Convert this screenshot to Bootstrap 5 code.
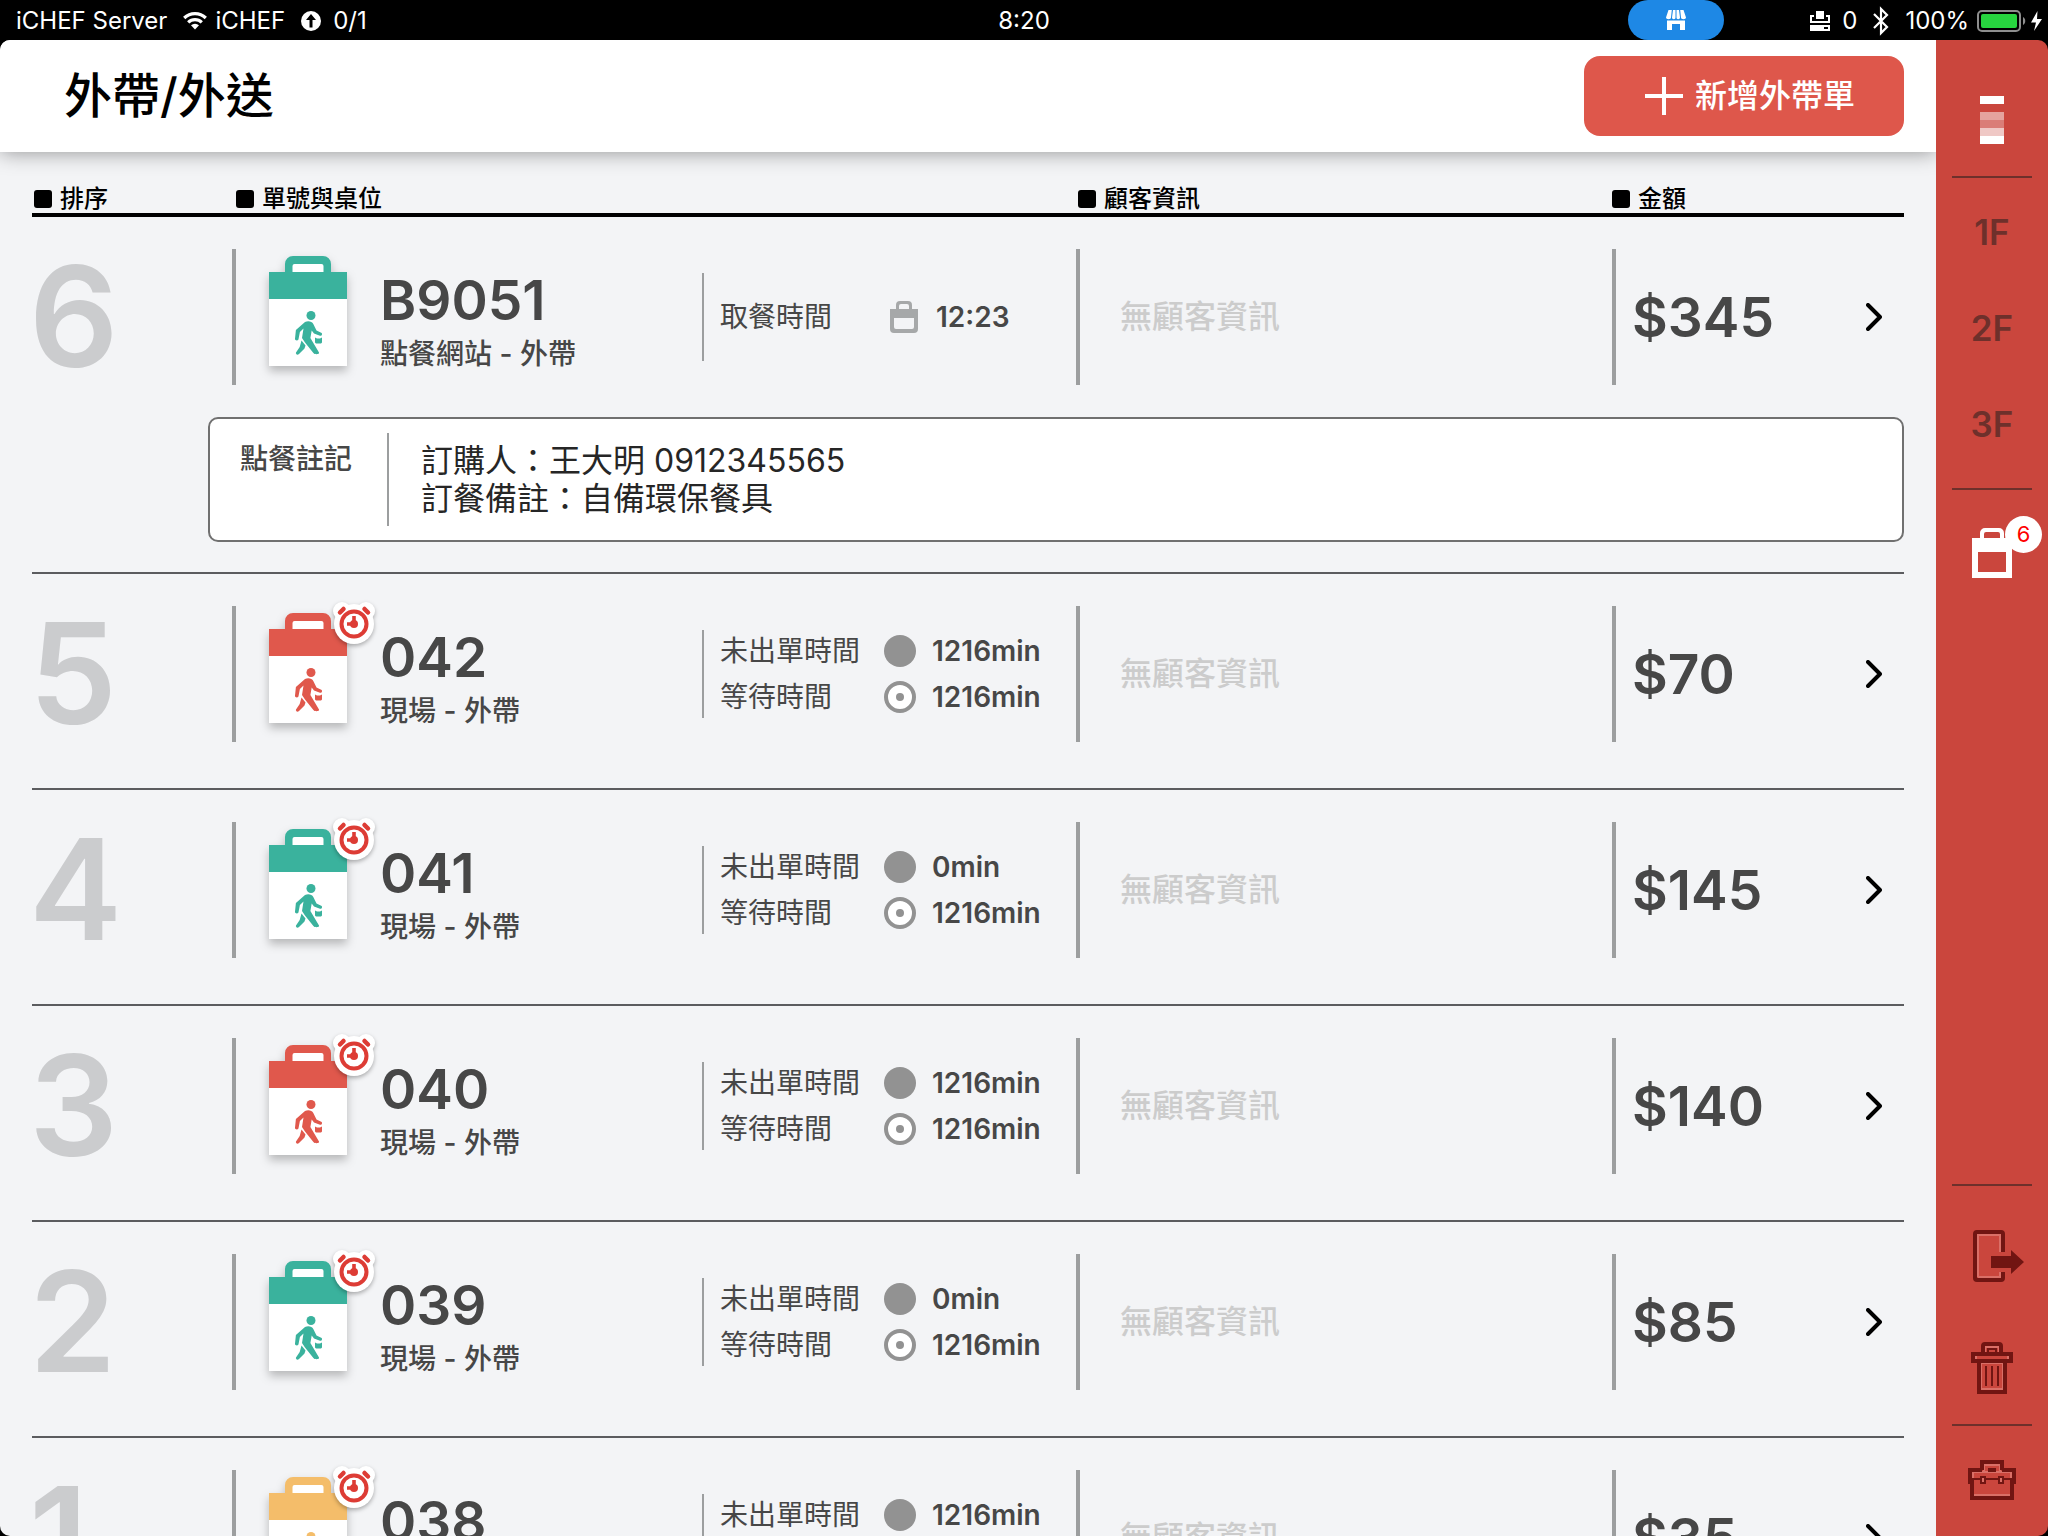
<!DOCTYPE html>
<html lang="zh-Hant">
<head>
<meta charset="utf-8">
<meta name="viewport" content="width=device-width, initial-scale=1">
<title>外帶/外送</title>
<link href="https://cdn.jsdelivr.net/npm/bootstrap@5.3.0/dist/css/bootstrap.min.css" rel="stylesheet">
<script src="https://cdn.jsdelivr.net/npm/bootstrap@5.3.0/dist/js/bootstrap.bundle.min.js"></script>
<style>
  body { background: #000; color: #474747; font-family: Inter, "Noto Sans CJK TC", sans-serif; font-size: 28px; line-height: 32px; }
  svg { display: block; flex: none; overflow: visible; }
  .status-bar { height: 40px; padding: 2px 5px 0 16px; color: #fff; font-size: 24px; }
  .status-side { flex: 1 1 0; }
  .status-side:first-child { margin-right: -11px; }
  .store-pill { width: 96px; height: 40px; border-radius: 20px; background: #1e88e5; margin: -2px 86px 0 0; }
  .queue-count { margin-left: -4px; }
  .shell { border-radius: 10px; overflow: hidden; }
  .content-pane { background: #f3f4f6; min-width: 0; overflow: hidden; }
  .page-head { height: 112px; padding: 0 32px 0 64px; background: #fff; box-shadow: 0 0 20px rgba(0,0,0,.42); z-index: 1; }
  .page-title { font-size: 48px; line-height: 56px; font-weight: 500; color: #000; }
  .btn-add { width: 320px; height: 80px; border-radius: 16px; background: #de574b; color: #fff; font-size: 32px; font-weight: 500; padding: 0 0 0 12px; gap: 12px; }
  .btn-add:hover { background: #cf4a3f; color: #fff; }
  .list-area { padding: 24px 32px 0; }
  .orders { width: 100%; table-layout: fixed; border-collapse: separate; border-spacing: 0; }
  .orders th { height: 41px; border-bottom: 4px solid #000; padding: 9px 0 0 2px; vertical-align: middle; font-size: 24px; line-height: 24px; font-weight: 500; color: #000; }
  .orders th::before { content: ""; display: inline-block; width: 18px; height: 18px; border-radius: 3px; background: #000; margin-right: 8px; vertical-align: -1px; }
  .orders th.th-flush { padding-left: 0; }
  .col-rank { width: 200px; }
  .col-guest { width: 536px; }
  .col-total { width: 292px; }
  .orders td { padding: 32px 0 46px; vertical-align: top; border-bottom: 2px solid #5b5c5f; }
  .orders tr.has-note td { padding-bottom: 0; border-bottom: 0; }
  .orders td.note-cell { padding: 32px 0 30px 176px; }
  .cell-box { height: 136px; }
  .bar-left { border-left: 4px solid #9c9e9f; }
  .rank { margin-left: -3px; font-size: 140px; line-height: 134px; font-weight: 600; color: #cbccce; }
  .bag-slot { width: 78px; height: 110px; margin: 0 33px 12px 33px; filter: drop-shadow(0 5px 5px rgba(0,0,0,.25)); }
  .bag-green { color: #3ab29d; }
  .bag-red { color: #e0584c; }
  .bag-amber { color: #f4bd6a; }
  .alarm { position: absolute; left: 96px; top: -5px; filter: drop-shadow(0 2px 2px rgba(0,0,0,.3)); }
  .order-no { font-size: 55px; line-height: 60px; font-weight: 600; }
  .source { font-weight: 500; line-height: 32px; padding-top: 8px; }
  .order-name { padding-top: 6px; }
  .timing { width: 374px; height: 88px; border-left: 2px solid #9c9e9f; padding-left: 16px; }
  .timing-line { height: 46px; flex: none; }
  .timing-name { width: 164px; }
  .timing-value { font-weight: 600; margin-left: 16px; }
  .timing-pickup .timing-name { width: 168px; }
  .guest { padding-left: 40px; font-size: 32px; font-weight: 500; color: #ccc; }
  .total-box { padding: 0 22px 0 16px; }
  .total { font-size: 55px; line-height: 60px; font-weight: 600; }
  .btn-open { color: #000; line-height: 0; }
  .note-box { background: #fff; border: 2px solid #707070; border-radius: 10px; padding: 14px 0 14px 30px; }
  .note-name { width: 147px; font-weight: 500; line-height: 52px; }
  .note-text { border-left: 2px solid #9c9e9f; padding: 9px 0 8px 32px; font-size: 32px; line-height: 38px; color: #262626; }
  .side-rail { width: 112px; padding: 0 16px; background: #ca463d; z-index: 2; }
  .side-rail hr { margin: 0; border-top: 2px solid #6e302b; opacity: 1; width: 80px; }
  .logo-slot { height: 136px; padding-top: 56px; }
  .floor { height: 96px; color: #6e302b; font-size: 35px; font-weight: 600; }
  .floors { padding: 6px 0 16px; }
  .takeout { margin-top: 38px; }
  .count { position: absolute; left: 33px; top: -12px; width: 37px; height: 37px; border-radius: 50%; background: #fff; color: #f00; font-size: 22px; line-height: 37px; }
  .rail-btn { line-height: 0; color: #711512; }
  .rail-pair { padding: 44px 0 30px; gap: 60px; }
  .rail-exit { margin-left: 14px; }
  .rail-last { padding: 34px 0 36px; }
</style>
</head>
<body class="vh-100 d-flex flex-column overflow-hidden">

<svg width="0" height="0" class="position-absolute" aria-hidden="true">
  <symbol id="bag" viewBox="0 0 78 110">
    <rect x="20" y="4" width="38" height="16" fill="#fff"/>
    <path fill="currentColor" fill-rule="evenodd" d="M16 16V8a8 8 0 0 1 8-8h30a8 8 0 0 1 8 8v8h16v28H0V16zM23.500 16h31v-6a2 2 0 0 0-2-2h-27a2 2 0 0 0-2 2z"/>
    <path fill="#fff" d="M0 43h78v67H0z"/>
    <g fill="currentColor">
      <circle cx="42" cy="59.500" r="4.500"/>
      <path d="M36 66c3-1.500 7-.8 8.300 2l3.200 6.500 4.700 2.200c1.600.8.8 3.600-1.200 3.100l-6-2.300-2.300-3-1.300 7.500 8.600 14.500c1 1.700-4.200 2.500-5.600.5L36 86.500l-3-4.500 1.500-9.500-3.600 3.500-1.400 7.300c-.5 1.800-3.700 1.400-3.500-.5l.9-8.800z"/>
      <path d="M32.500 84.500l4 5-1 3-5.500 5.500c-2 1.800-3.600-.5-3-1.500l3.700-5.500z"/>
      <path d="M46 81.500l2 1h3l2-1v5l-1 1h-5l-1-1z"/>
    </g>
  </symbol>
  <symbol id="alarm" viewBox="0 0 44 44">
    <g fill="#fff"><circle cx="22" cy="23" r="20"/><circle cx="10" cy="10" r="9"/><circle cx="34" cy="10" r="9"/></g>
    <circle cx="22" cy="23" r="12.500" fill="none" stroke="#dd3c35" stroke-width="4"/>
    <path d="M8 11.500l3.500-3.500M36 11.500l-3.500-3.500" stroke="#dd3c35" stroke-width="4.500" stroke-linecap="round"/>
    <circle cx="22" cy="23" r="4" fill="#dd3c35"/>
    <path d="M22 15v8h-7" fill="none" stroke="#dd3c35" stroke-width="3.600"/>
  </symbol>
  <symbol id="dot" viewBox="0 0 32 32"><circle cx="16" cy="16" r="16" fill="#929292"/></symbol>
  <symbol id="target" viewBox="0 0 32 32"><circle cx="16" cy="16" r="14" fill="#fff" stroke="#929292" stroke-width="4"/><circle cx="16" cy="16" r="4" fill="#929292"/></symbol>
  <symbol id="chevron" viewBox="0 0 16 28"><path d="M2 2l12 12L2 26" fill="none" stroke="currentColor" stroke-width="4" stroke-linecap="round" stroke-linejoin="round"/></symbol>
</svg>

<header class="status-bar d-flex align-items-center flex-shrink-0">
  <div class="status-side d-flex align-items-center">
    <span>iCHEF Server</span>
    <svg class="ms-3 me-2" width="24" height="18" viewBox="0 0 24 18" fill="none" stroke="#fff" stroke-width="3.200"><path d="M1.200 6a15.500 15.500 0 0 1 21.600 0M5.200 10.300a9.800 9.800 0 0 1 13.600 0"/><path d="M12 17.500l-4-4.300a6 6 0 0 1 8 0z" fill="#fff" stroke="none"/></svg>
    <span>iCHEF</span>
    <svg class="mx-3" width="20" height="20" viewBox="0 0 20 20"><circle cx="10" cy="10" r="10" fill="#fff"/><path d="M10 3l5 6h-3.500v7.500h-3V9H5z" fill="#000"/></svg>
    <span class="queue-count">0/1</span>
  </div>
  <time>8:20</time>
  <div class="status-side d-flex align-items-center justify-content-end">
    <button type="button" class="btn p-0 border-0 store-pill d-flex align-items-center justify-content-center" aria-label="門市">
      <svg width="20" height="20" viewBox="0 0 20 20" fill="#fff"><path d="M2.500 0h3.300L5 7.500c0 1-1 1.700-2.500 1.700S0 8.300 0 7.500zM7 0h2.500v7.500c0 1-.6 1.700-1.700 1.700S6 8.500 6 7.500zM10.500 0H13l1 7.500c0 1-.7 1.700-1.800 1.700s-1.700-.7-1.700-1.700zM14.200 0h3.300L20 7.500c0 .8-1 1.700-2.500 1.700S15 8.500 15 7.500zM1 10.500h18V20h-5v-6H6v6H1z"/></svg>
    </button>
    <svg class="me-2" width="20" height="20" viewBox="0 0 20 20" fill="#fff"><path d="M6 0h8v8H6zM0 4h4v2H2v4h16V6h-2V4h4v8H0zM0 14h20v6H0z"/><path d="M14 16h4v2h-4z" fill="#000"/></svg>
    <span class="ms-1">0</span>
    <svg class="mx-3" width="16" height="28" viewBox="0 0 16 28" fill="none" stroke="#fff" stroke-width="2.200"><path d="M1 7l13 13-6 6V2l6 6L1 21"/></svg>
    <span>100%</span>
    <svg class="ms-2" width="66" height="22" viewBox="0 0 66 22"><rect x="1" y="1" width="42" height="20" rx="4" fill="none" stroke="#8e8e8e" stroke-width="2"/><rect x="4" y="4" width="36" height="14" rx="2" fill="#27d53f"/><path d="M46 7c3 1.500 3 6.500 0 8z" fill="#8e8e8e"/><path d="M60.500 1L54 12.500h5L57 21l8-12h-5z" fill="#fff"/></svg>
  </div>
</header>

<div class="shell d-flex flex-grow-1">
  <main class="content-pane flex-grow-1 d-flex flex-column">
    <div class="page-head position-relative d-flex align-items-center justify-content-between flex-shrink-0">
      <h1 class="page-title m-0">外帶/外送</h1>
      <button type="button" class="btn btn-add border-0 d-flex align-items-center justify-content-center">
        <svg width="38" height="38" viewBox="0 0 38 38" stroke="#fff" stroke-width="4"><path d="M19 0v38M0 19h38"/></svg>新增外帶單
      </button>
    </div>
    <div class="list-area">
      <table class="orders">
        <colgroup><col class="col-rank"><col><col class="col-guest"><col class="col-total"></colgroup>
        <thead><tr><th scope="col">排序</th><th scope="col" class="ps-1">單號與桌位</th><th scope="col">顧客資訊</th><th scope="col" class="th-flush">金額</th></tr></thead>
        <tbody>
          <tr class="has-note">
            <td><div class="cell-box rank">6</div></td>
            <td><div class="cell-box bar-left d-flex align-items-center position-relative">
              <svg class="bag-slot bag-green"><use href="#bag"/></svg>
              <div class="order-name flex-grow-1"><div class="order-no">B9051</div><div class="source">點餐網站 - 外帶</div></div>
              <div class="timing timing-pickup d-flex flex-column justify-content-center">
                <div class="timing-line d-flex align-items-center"><span class="timing-name">取餐時間</span>
                  <svg width="32" height="32" viewBox="0 0 32 32"><path fill="#a6a8a9" fill-rule="evenodd" d="M8 8V4a4 4 0 0 1 4-4h8a4 4 0 0 1 4 4v4h6v20a4 4 0 0 1-4 4H6a4 4 0 0 1-4-4V8zM11 8h10V5a2 2 0 0 0-2-2h-6a2 2 0 0 0-2 2zM6 17v9a2 2 0 0 0 2 2h16a2 2 0 0 0 2-2v-9z"/></svg>
                  <span class="timing-value">12:23</span></div>
              </div>
            </div></td>
            <td><div class="cell-box bar-left guest d-flex align-items-center">無顧客資訊</div></td>
            <td><div class="cell-box bar-left total-box d-flex align-items-center justify-content-between"><span class="total">$345</span><button type="button" class="btn btn-open border-0 p-0" aria-label="開啟"><svg width="16" height="28"><use href="#chevron"/></svg></button></div></td>
          </tr>
          <tr>
            <td colspan="4" class="note-cell"><div class="note-box d-flex">
              <div class="note-name">點餐註記</div>
              <div class="note-text">訂購人：王大明 0912345565<br>訂餐備註：自備環保餐具</div>
            </div></td>
          </tr>
          <tr>
            <td><div class="cell-box rank">5</div></td>
            <td><div class="cell-box bar-left d-flex align-items-center position-relative">
              <svg class="bag-slot bag-red"><use href="#bag"/></svg><svg class="alarm" width="44" height="44"><use href="#alarm"/></svg>
              <div class="order-name flex-grow-1"><div class="order-no">042</div><div class="source">現場 - 外帶</div></div>
              <div class="timing d-flex flex-column justify-content-center">
                <div class="timing-line d-flex align-items-center"><span class="timing-name">未出單時間</span><svg width="32" height="32"><use href="#dot"/></svg><span class="timing-value">1216min</span></div>
                <div class="timing-line d-flex align-items-center"><span class="timing-name">等待時間</span><svg width="32" height="32"><use href="#target"/></svg><span class="timing-value">1216min</span></div>
              </div>
            </div></td>
            <td><div class="cell-box bar-left guest d-flex align-items-center">無顧客資訊</div></td>
            <td><div class="cell-box bar-left total-box d-flex align-items-center justify-content-between"><span class="total">$70</span><button type="button" class="btn btn-open border-0 p-0" aria-label="開啟"><svg width="16" height="28"><use href="#chevron"/></svg></button></div></td>
          </tr>
          <tr>
            <td><div class="cell-box rank">4</div></td>
            <td><div class="cell-box bar-left d-flex align-items-center position-relative">
              <svg class="bag-slot bag-green"><use href="#bag"/></svg><svg class="alarm" width="44" height="44"><use href="#alarm"/></svg>
              <div class="order-name flex-grow-1"><div class="order-no">041</div><div class="source">現場 - 外帶</div></div>
              <div class="timing d-flex flex-column justify-content-center">
                <div class="timing-line d-flex align-items-center"><span class="timing-name">未出單時間</span><svg width="32" height="32"><use href="#dot"/></svg><span class="timing-value">0min</span></div>
                <div class="timing-line d-flex align-items-center"><span class="timing-name">等待時間</span><svg width="32" height="32"><use href="#target"/></svg><span class="timing-value">1216min</span></div>
              </div>
            </div></td>
            <td><div class="cell-box bar-left guest d-flex align-items-center">無顧客資訊</div></td>
            <td><div class="cell-box bar-left total-box d-flex align-items-center justify-content-between"><span class="total">$145</span><button type="button" class="btn btn-open border-0 p-0" aria-label="開啟"><svg width="16" height="28"><use href="#chevron"/></svg></button></div></td>
          </tr>
          <tr>
            <td><div class="cell-box rank">3</div></td>
            <td><div class="cell-box bar-left d-flex align-items-center position-relative">
              <svg class="bag-slot bag-red"><use href="#bag"/></svg><svg class="alarm" width="44" height="44"><use href="#alarm"/></svg>
              <div class="order-name flex-grow-1"><div class="order-no">040</div><div class="source">現場 - 外帶</div></div>
              <div class="timing d-flex flex-column justify-content-center">
                <div class="timing-line d-flex align-items-center"><span class="timing-name">未出單時間</span><svg width="32" height="32"><use href="#dot"/></svg><span class="timing-value">1216min</span></div>
                <div class="timing-line d-flex align-items-center"><span class="timing-name">等待時間</span><svg width="32" height="32"><use href="#target"/></svg><span class="timing-value">1216min</span></div>
              </div>
            </div></td>
            <td><div class="cell-box bar-left guest d-flex align-items-center">無顧客資訊</div></td>
            <td><div class="cell-box bar-left total-box d-flex align-items-center justify-content-between"><span class="total">$140</span><button type="button" class="btn btn-open border-0 p-0" aria-label="開啟"><svg width="16" height="28"><use href="#chevron"/></svg></button></div></td>
          </tr>
          <tr>
            <td><div class="cell-box rank">2</div></td>
            <td><div class="cell-box bar-left d-flex align-items-center position-relative">
              <svg class="bag-slot bag-green"><use href="#bag"/></svg><svg class="alarm" width="44" height="44"><use href="#alarm"/></svg>
              <div class="order-name flex-grow-1"><div class="order-no">039</div><div class="source">現場 - 外帶</div></div>
              <div class="timing d-flex flex-column justify-content-center">
                <div class="timing-line d-flex align-items-center"><span class="timing-name">未出單時間</span><svg width="32" height="32"><use href="#dot"/></svg><span class="timing-value">0min</span></div>
                <div class="timing-line d-flex align-items-center"><span class="timing-name">等待時間</span><svg width="32" height="32"><use href="#target"/></svg><span class="timing-value">1216min</span></div>
              </div>
            </div></td>
            <td><div class="cell-box bar-left guest d-flex align-items-center">無顧客資訊</div></td>
            <td><div class="cell-box bar-left total-box d-flex align-items-center justify-content-between"><span class="total">$85</span><button type="button" class="btn btn-open border-0 p-0" aria-label="開啟"><svg width="16" height="28"><use href="#chevron"/></svg></button></div></td>
          </tr>
          <tr>
            <td><div class="cell-box rank">1</div></td>
            <td><div class="cell-box bar-left d-flex align-items-center position-relative">
              <svg class="bag-slot bag-amber"><use href="#bag"/></svg><svg class="alarm" width="44" height="44"><use href="#alarm"/></svg>
              <div class="order-name flex-grow-1"><div class="order-no">038</div><div class="source">現場 - 外帶</div></div>
              <div class="timing d-flex flex-column justify-content-center">
                <div class="timing-line d-flex align-items-center"><span class="timing-name">未出單時間</span><svg width="32" height="32"><use href="#dot"/></svg><span class="timing-value">1216min</span></div>
                <div class="timing-line d-flex align-items-center"><span class="timing-name">等待時間</span><svg width="32" height="32"><use href="#target"/></svg><span class="timing-value">1216min</span></div>
              </div>
            </div></td>
            <td><div class="cell-box bar-left guest d-flex align-items-center">無顧客資訊</div></td>
            <td><div class="cell-box bar-left total-box d-flex align-items-center justify-content-between"><span class="total">$35</span><button type="button" class="btn btn-open border-0 p-0" aria-label="開啟"><svg width="16" height="28"><use href="#chevron"/></svg></button></div></td>
          </tr>
        </tbody>
      </table>
    </div>
  </main>

  <nav class="side-rail position-relative d-flex flex-column align-items-center flex-shrink-0" aria-label="樓層">
    <div class="logo-slot"><svg width="24" height="48" viewBox="0 0 24 48" fill="#fff"><path d="M0 0h24v8H0z"/><path d="M0 16h24v8H0z" opacity=".5"/><path d="M0 24h24v8H0z" opacity=".3"/><path d="M0 32h24v8H0z" opacity=".7"/><path d="M0 40h24v8H0z"/></svg></div>
    <hr>
    <div class="floors d-flex flex-column">
      <a href="#" class="floor d-flex align-items-center justify-content-center text-decoration-none">1F</a>
      <a href="#" class="floor d-flex align-items-center justify-content-center text-decoration-none">2F</a>
      <a href="#" class="floor d-flex align-items-center justify-content-center text-decoration-none">3F</a>
    </div>
    <hr>
    <a href="#" class="takeout position-relative text-decoration-none" aria-label="外帶">
      <svg width="40" height="50" viewBox="0 0 40 50"><path fill="#fff" fill-rule="evenodd" d="M8 10V5a5 5 0 0 1 5-5h14a5 5 0 0 1 5 5v5h8v40H0V10zM12 10h16V6a2 2 0 0 0-2-2H14a2 2 0 0 0-2 2zM6 24v20h28V24z"/></svg>
      <span class="count text-center">6</span>
    </a>
    <div class="mt-auto d-flex flex-column align-items-center">
      <hr>
      <div class="rail-pair d-flex flex-column align-items-center">
        <button type="button" class="btn border-0 p-0 rail-btn rail-exit" aria-label="登出"><svg width="52" height="52" viewBox="0 0 52 52"><path d="M30 22V4a2 2 0 0 0-2-2H4a2 2 0 0 0-2 2v44a2 2 0 0 0 2 2h24a2 2 0 0 0 2-2v-6" fill="none" stroke="currentColor" stroke-width="4"/><path d="M5 47V5h22v17M5 47h22v-5" fill="none" stroke="#da6f67" stroke-width="2"/><path d="M18 26h20v-6l13 12-13 12v-6H18z" fill="currentColor"/></svg></button>
        <button type="button" class="btn border-0 p-0 rail-btn" aria-label="刪除"><svg width="42" height="52" viewBox="0 0 42 52" fill="none" stroke="currentColor"><g stroke="#da6f67" stroke-width="2"><path d="M14 10V5h14v5M5 18V13h32v5M10 47h22M10 47V21h22v26"/></g><path stroke-width="4" d="M12 10V4a2 2 0 0 1 2-2h14a2 2 0 0 1 2 2v6M2 12h38v7H2zM8 20v30h26V20"/><path stroke-width="2" d="M17 12V7h8v5M15 24v20M21 24v20M27 24v20"/></svg></button>
      </div>
      <hr>
      <div class="rail-last"><button type="button" class="btn border-0 p-0 rail-btn" aria-label="工具"><svg width="48" height="40" viewBox="0 0 48 40" fill="none" stroke="currentColor"><g stroke="#da6f67" stroke-width="2"><path d="M16 11V5h16v6M5 18v-6h38v6M6 35h36"/></g><path stroke-width="4" d="M14 10V2h20v8M14 10H2v12h2M34 10h12v12h-2M4 20v18h40V20"/><path stroke-width="2" d="M4 19h40"/><path fill="#da6f67" stroke-width="2" d="M13 17h4v6h-4zM31 17h4v6h-4z"/><path stroke-width="4" d="M20 10h8"/></svg></button></div>
    </div>
  </nav>
</div>
</body>
</html>
